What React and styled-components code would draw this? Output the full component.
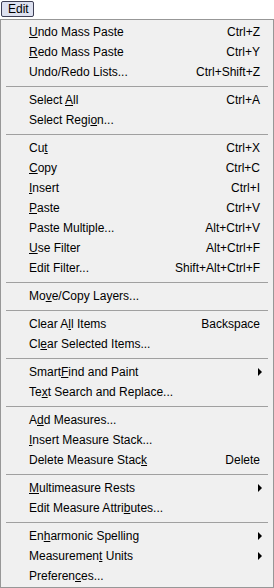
import React from "react";
import styled, { createGlobalStyle } from "styled-components";

const GlobalStyle = createGlobalStyle`
    html, body {
        margin: 0;
        padding: 0;
        background: #ffffff;
    }
    body {
        font-family: "Liberation Sans", Arial, sans-serif;
        font-size: 12px;
        color: #000000;
    }
`;

const Page = styled.div`
    width: 274px;
    height: 588px;
    display: flex;
    flex-direction: column;
    overflow: hidden;
`;

const MenuBar = styled.div`
    height: 19px;
    display: flex;
    align-items: flex-start;
    padding: 1px 0 0 1px;
    box-sizing: border-box;
    background: #ffffff;
`;

const BarButton = styled.div`
    height: 16px;
    width: 33px;
    box-sizing: border-box;
    display: flex;
    align-items: center;
    padding-left: 6px;
    background: #dde1f0;
    border: 1px solid #3d3f55;
    border-radius: 2px;
    line-height: 14px;
`;

const MenuBox = styled.div`
    flex: 1;
    display: flex;
    flex-direction: column;
    background: #f0f0f0;
    border: 1px solid #979797;
    padding: 2px 0 1px 0;
`;

const Item = styled.div`
    height: 20px;
    display: flex;
    align-items: center;
    padding: 0 13px 0 28px;
    white-space: nowrap;
`;

const Label = styled.span`
    flex: 1;
`;

const Shortcut = styled.span`
    margin-left: 16px;
`;

const Key = styled.span`
    text-decoration: underline;
    text-underline-offset: 1px;
`;

const Arrow = styled.span`
    width: 0;
    height: 0;
    margin-right: -2px;
    border-top: 4px solid transparent;
    border-bottom: 4px solid transparent;
    border-left: 4px solid #000000;
`;

const Separator = styled.div`
    height: 8px;
    display: flex;
    align-items: center;
    padding: 0 5px;

    &::after {
        content: "";
        flex: 1;
        border-top: 1px solid #a0a0a0;
    }
`;

const items = [
    { label: "Undo Mass Paste", key: 0, shortcut: "Ctrl+Z" },
    { label: "Redo Mass Paste", key: 0, shortcut: "Ctrl+Y" },
    { label: "Undo/Redo Lists...", shortcut: "Ctrl+Shift+Z" },
    "sep",
    { label: "Select All", key: 7, shortcut: "Ctrl+A" },
    { label: "Select Region...", key: 11 },
    "sep",
    { label: "Cut", key: 2, shortcut: "Ctrl+X" },
    { label: "Copy", key: 0, shortcut: "Ctrl+C" },
    { label: "Insert", key: 0, shortcut: "Ctrl+I" },
    { label: "Paste", key: 0, shortcut: "Ctrl+V" },
    { label: "Paste Multiple...", shortcut: "Alt+Ctrl+V" },
    { label: "Use Filter", key: 0, shortcut: "Alt+Ctrl+F" },
    { label: "Edit Filter...", shortcut: "Shift+Alt+Ctrl+F" },
    "sep",
    { label: "Move/Copy Layers...", key: 2 },
    "sep",
    { label: "Clear All Items", key: 7, shortcut: "Backspace" },
    { label: "Clear Selected Items...", key: 2 },
    "sep",
    { label: "SmartFind and Paint", key: 5, submenu: true },
    { label: "Text Search and Replace...", key: 2 },
    "sep",
    { label: "Add Measures...", key: 1 },
    { label: "Insert Measure Stack...", key: 0 },
    { label: "Delete Measure Stack", key: 19, shortcut: "Delete" },
    "sep",
    { label: "Multimeasure Rests", key: 0, submenu: true },
    { label: "Edit Measure Attributes...", key: 18 },
    "sep",
    { label: "Enharmonic Spelling", key: 2, submenu: true },
    { label: "Measurement Units", key: 10, submenu: true },
    { label: "Preferences...", key: 8 },
];

function ItemLabel({ label, k }) {
    if (k === undefined) return <Label>{label}</Label>;
    return (
        <Label>
            {label.slice(0, k)}
            <Key>{label[k]}</Key>
            {label.slice(k + 1)}
        </Label>
    );
}

export default function App() {
    return (
        <Page>
            <GlobalStyle />
            <MenuBar>
                <BarButton>Edit</BarButton>
            </MenuBar>
            <MenuBox>
                {items.map((it, i) =>
                    it === "sep" ? (
                        <Separator key={i} />
                    ) : (
                        <Item key={i}>
                            <ItemLabel label={it.label} k={it.key} />
                            {it.shortcut && <Shortcut>{it.shortcut}</Shortcut>}
                            {it.submenu && <Arrow />}
                        </Item>
                    )
                )}
            </MenuBox>
        </Page>
    );
}
